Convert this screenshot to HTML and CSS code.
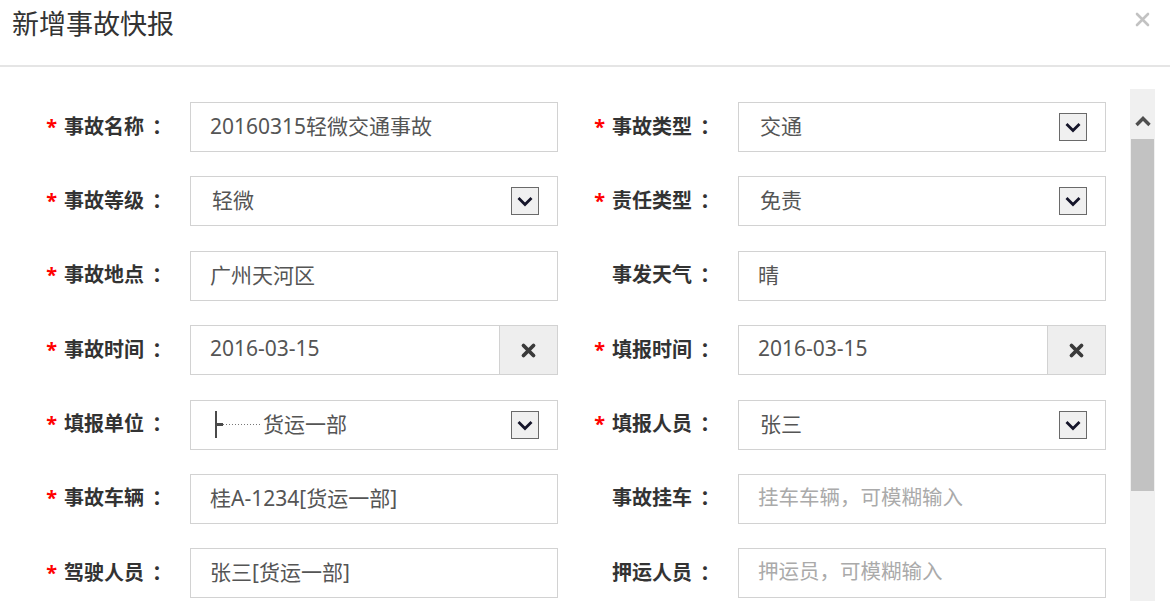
FILE: index.html
```html
<!DOCTYPE html>
<html lang="zh-CN">
<head>
    <meta charset="UTF-8">
    <meta name="viewport" content="width=device-width, initial-scale=1.0">
    <title>新增事故快报</title>
    <link rel="stylesheet" href="styles.css">
</head>
<body>
    <div class="dialog">
        <div class="dialog-header">
            <h3 class="dialog-title">新增事故快报</h3>
            <span class="dialog-close">
                <svg width="15" height="15" viewBox="0 0 15 15"><path d="M2 2 L13 13 M13 2 L2 13" stroke="#c2c2c2" stroke-width="2.6" stroke-linecap="round"/></svg>
            </span>
        </div>

        <div class="dialog-body">
            <form class="report-form">
                <div class="form-row">
                    <div class="field">
                        <label class="field-label"><span class="req">*</span>事故名称<span class="colon">：</span></label>
                        <input class="field-input" type="text" value="20160315轻微交通事故">
                    </div>
                    <div class="field">
                        <label class="field-label"><span class="req">*</span>事故类型<span class="colon">：</span></label>
                        <div class="field-select">
                            <span class="select-text">交通</span>
                            <span class="select-arrow"><svg width="26" height="26" viewBox="0 0 26 26"><path d="M6.5 10 L13 16.5 L19.5 10" fill="none" stroke="#15152a" stroke-width="2.8"/></svg></span>
                        </div>
                    </div>
                </div>

                <div class="form-row">
                    <div class="field">
                        <label class="field-label"><span class="req">*</span>事故等级<span class="colon">：</span></label>
                        <div class="field-select">
                            <span class="select-text">轻微</span>
                            <span class="select-arrow"><svg width="26" height="26" viewBox="0 0 26 26"><path d="M6.5 10 L13 16.5 L19.5 10" fill="none" stroke="#15152a" stroke-width="2.8"/></svg></span>
                        </div>
                    </div>
                    <div class="field">
                        <label class="field-label"><span class="req">*</span>责任类型<span class="colon">：</span></label>
                        <div class="field-select">
                            <span class="select-text">免责</span>
                            <span class="select-arrow"><svg width="26" height="26" viewBox="0 0 26 26"><path d="M6.5 10 L13 16.5 L19.5 10" fill="none" stroke="#15152a" stroke-width="2.8"/></svg></span>
                        </div>
                    </div>
                </div>

                <div class="form-row">
                    <div class="field">
                        <label class="field-label"><span class="req">*</span>事故地点<span class="colon">：</span></label>
                        <input class="field-input" type="text" value="广州天河区">
                    </div>
                    <div class="field">
                        <label class="field-label">事发天气<span class="colon">：</span></label>
                        <input class="field-input" type="text" value="晴">
                    </div>
                </div>

                <div class="form-row">
                    <div class="field">
                        <label class="field-label"><span class="req">*</span>事故时间<span class="colon">：</span></label>
                        <div class="input-group">
                            <input class="group-input" type="text" value="2016-03-15">
                            <span class="clear-btn"><svg width="17" height="17" viewBox="0 0 17 17"><path d="M3.5 3.5 L13.5 13.5 M13.5 3.5 L3.5 13.5" stroke="#3a3a3a" stroke-width="3.8" stroke-linecap="round"/></svg></span>
                        </div>
                    </div>
                    <div class="field">
                        <label class="field-label"><span class="req">*</span>填报时间<span class="colon">：</span></label>
                        <div class="input-group">
                            <input class="group-input" type="text" value="2016-03-15">
                            <span class="clear-btn"><svg width="17" height="17" viewBox="0 0 17 17"><path d="M3.5 3.5 L13.5 13.5 M13.5 3.5 L3.5 13.5" stroke="#3a3a3a" stroke-width="3.8" stroke-linecap="round"/></svg></span>
                        </div>
                    </div>
                </div>

                <div class="form-row">
                    <div class="field">
                        <label class="field-label"><span class="req">*</span>填报单位<span class="colon">：</span></label>
                        <div class="field-select">
                            <span class="select-text"><span class="tree-line"></span>货运一部</span>
                            <span class="select-arrow"><svg width="26" height="26" viewBox="0 0 26 26"><path d="M6.5 10 L13 16.5 L19.5 10" fill="none" stroke="#15152a" stroke-width="2.8"/></svg></span>
                        </div>
                    </div>
                    <div class="field">
                        <label class="field-label"><span class="req">*</span>填报人员<span class="colon">：</span></label>
                        <div class="field-select">
                            <span class="select-text">张三</span>
                            <span class="select-arrow"><svg width="26" height="26" viewBox="0 0 26 26"><path d="M6.5 10 L13 16.5 L19.5 10" fill="none" stroke="#15152a" stroke-width="2.8"/></svg></span>
                        </div>
                    </div>
                </div>

                <div class="form-row">
                    <div class="field">
                        <label class="field-label"><span class="req">*</span>事故车辆<span class="colon">：</span></label>
                        <input class="field-input" type="text" value="桂A-1234[货运一部]">
                    </div>
                    <div class="field">
                        <label class="field-label">事故挂车<span class="colon">：</span></label>
                        <input class="field-input" type="text" placeholder="挂车车辆，可模糊输入">
                    </div>
                </div>

                <div class="form-row">
                    <div class="field">
                        <label class="field-label"><span class="req">*</span>驾驶人员<span class="colon">：</span></label>
                        <input class="field-input" type="text" value="张三[货运一部]">
                    </div>
                    <div class="field">
                        <label class="field-label">押运人员<span class="colon">：</span></label>
                        <input class="field-input" type="text" placeholder="押运员，可模糊输入">
                    </div>
                </div>
            </form>

            <div class="scrollbar">
                <div class="scroll-up">
                    <svg width="18" height="12" viewBox="0 0 18 12"><path d="M2.5 10 L9 3.5 L15.5 10" fill="none" stroke="#4f4f4f" stroke-width="3.4"/></svg>
                </div>
                <div class="scroll-thumb"></div>
            </div>
        </div>
    </div>
</body>
</html>
```

FILE: styles.css
```css
body {
    margin: 0;
    background-color: white;
    font-family: "Noto Sans", "Noto Sans CJK SC", sans-serif;
    color: #333;
    overflow: hidden;
}
.dialog {
    width: 1170px;
    height: 601px;
    display: flex;
    flex-direction: column;
}
.dialog-header {
    height: 65px;
    border-bottom: 2px solid #e5e5e5;
    display: flex;
    justify-content: space-between;
    align-items: flex-start;
}
.dialog-title {
    margin: 0;
    padding-left: 12px;
    font-size: 27px;
    font-weight: normal;
    line-height: 48px;
    color: #333;
}
.dialog-close {
    margin-top: 12px;
    margin-right: 20px;
    width: 15px;
    height: 15px;
    cursor: pointer;
}
.dialog-close svg {
    display: block;
}
.dialog-body {
    flex: 1;
    display: flex;
    min-height: 0;
}
.report-form {
    flex: 1;
    padding-top: 35px;
    padding-left: 10px;
    display: flex;
    flex-direction: column;
    gap: 24.4px;
}
.form-row {
    display: flex;
    height: 50px;
}
.field {
    width: 548px;
    display: flex;
    align-items: center;
}
.field-label {
    box-sizing: border-box;
    width: 180px;
    padding-right: 18px;
    padding-bottom: 4px;
    text-align: right;
    font-size: 20px;
    font-weight: bold;
    color: #333;
    white-space: nowrap;
}
.colon {
    font-family: "Noto Sans CJK TC", sans-serif;
    margin-left: 8px;
}
.req {
    color: #f00;
    margin-right: 7px;
}
.field-input {
    box-sizing: border-box;
    width: 368px;
    height: 50px;
    border: 1px solid #d2d2d2;
    padding: 0 0 4px 19px;
    font-family: "Noto Sans", "Noto Sans CJK SC", sans-serif;
    font-size: 21px;
    color: #555;
    outline: none;
}
.field-input::placeholder {
    color: #aaa;
    font-family: "Noto Sans CJK TC", sans-serif;
    font-size: 20.5px;
}
.field-select {
    box-sizing: border-box;
    width: 368px;
    height: 50px;
    border: 1px solid #d2d2d2;
    padding-left: 21px;
    padding-right: 18px;
    display: flex;
    align-items: center;
    justify-content: space-between;
    font-size: 21px;
    color: #555;
}
.select-text {
    display: flex;
    align-items: center;
    padding-bottom: 4px;
}
.select-arrow {
    box-sizing: border-box;
    width: 28px;
    height: 28px;
    border: 1px solid #6a6a6a;
    background-color: #f0f0f0;
}
.select-arrow svg {
    display: block;
}
.tree-line {
    width: 44px;
    height: 27px;
    margin-left: 3px;
    margin-right: 2px;
    border-left: 2px solid #4a4a4a;
    background-image:
        linear-gradient(#4a4a4a, #4a4a4a),
        linear-gradient(to right, #777 50%, transparent 50%);
    background-size: 6px 3px, 3px 1px;
    background-repeat: no-repeat, repeat-x;
    background-position: 0 12px, 0 13px;
    margin-top: 4px;
}
.input-group {
    box-sizing: border-box;
    width: 368px;
    height: 50px;
    border: 1px solid #d2d2d2;
    display: flex;
}
.group-input {
    flex: 1;
    min-width: 0;
    border: none;
    padding: 0 0 4px 19px;
    font-family: "Noto Sans", "Noto Sans CJK SC", sans-serif;
    font-size: 21px;
    color: #555;
    outline: none;
}
.clear-btn {
    width: 57px;
    border-left: 1px solid #d2d2d2;
    background-color: #eee;
    display: flex;
    justify-content: center;
    align-items: center;
    cursor: pointer;
}
.scrollbar {
    width: 25px;
    margin-top: 22px;
    margin-right: 15px;
    background-color: #f0f0f0;
    display: flex;
    flex-direction: column;
    align-items: center;
}
.scroll-up {
    height: 50px;
    display: flex;
    justify-content: center;
    align-items: center;
}
.scroll-up svg {
    display: block;
    margin-top: 14px;
}
.scroll-thumb {
    width: 23px;
    height: 352px;
    background-color: #c2c2c2;
}
```
